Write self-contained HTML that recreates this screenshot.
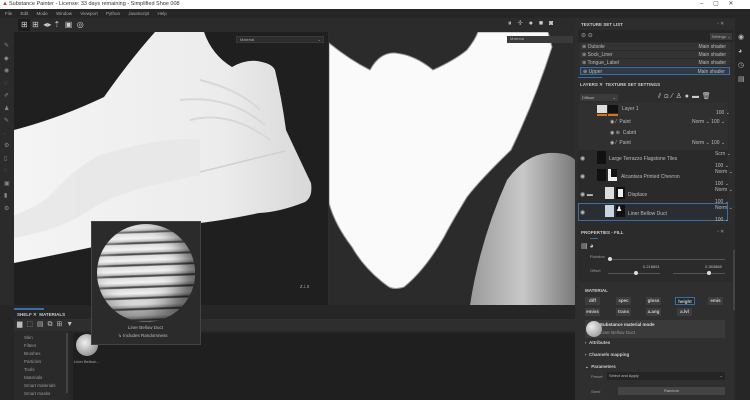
<!DOCTYPE html>
<html><head><meta charset="utf-8"><style>
*{margin:0;padding:0;box-sizing:border-box}
body{width:750px;height:400px;overflow:hidden;background:#2d2d2d;font-family:"Liberation Sans",sans-serif;font-size:5px;color:#bbb;position:relative}
.a{position:absolute}
.t{white-space:nowrap}
.row{position:absolute;left:580px;width:150px;height:8px;background:#333;border-bottom:1px solid #2a2a2a}
.btn{position:absolute;height:8px;background:#3d3d3d;color:#ccc;font-size:4.5px;text-align:center;line-height:8px;font-weight:bold}
</style></head><body>
<!-- title bar -->
<div class="a" style="left:0;top:0;width:750px;height:9px;background:#fff"></div>
<div class="a t" style="left:2px;top:1px;font-size:6px;color:#c33">&#9650;</div>
<div class="a t" style="left:9px;top:1px;font-size:5.5px;color:#333">Substance Painter - License: 33 days remaining - Simplified Shoe 008</div>
<div class="a t" style="left:700px;top:0px;font-size:6px;color:#444;word-spacing:8px">– ▢ ✕</div>
<!-- menu -->
<div class="a" style="left:0;top:9px;width:750px;height:9px;background:#262626"></div>
<div class="a t" style="left:5px;top:11px;font-size:4.5px;color:#aaa;word-spacing:7px">File Edit Mode Window Viewport Python JavaScript Help</div>
<!-- toolbar -->
<div class="a" style="left:0;top:18px;width:578px;height:14px;background:#2b2b2b"></div>
<div class="a" style="left:18px;top:19px;width:12px;height:12px;background:#1c1c1c"></div>
<div class="a t" style="left:21px;top:20px;font-size:8px;color:#ccc">⊞ &nbsp;⊞ &nbsp;◂▸ ⇡ &nbsp;▣ &nbsp;◎</div>
<div class="a t" style="left:508px;top:20px;font-size:7px;color:#ccc;word-spacing:4px">⏸ ✛ ● ■ ◙</div>
<!-- left tool strip -->
<div class="a" style="left:0;top:32px;width:14px;height:273px;background:#2b2b2b"></div>
<div class="a" style="left:4px;top:40px;width:6px;line-height:12.5px;font-size:6px;color:#888">✎<br>◆<br>◉<br>◌<br>✐<br>♟<br>✎<br>·<br>⚙<br>▯<br>◌<br>▣<br>▮<br>⚙</div>
<!-- left viewport -->
<div class="a" style="left:14px;top:32px;width:314px;height:273px;background:#1f1f1f;overflow:hidden">
<svg width="314" height="273" viewBox="14 32 314 273" style="position:absolute;left:0;top:0">
<defs><linearGradient id="g1" x1="0" y1="0" x2="1" y2="0"><stop offset="0" stop-color="#f4f4f4"/><stop offset=".7" stop-color="#ececec"/><stop offset="1" stop-color="#d8d8d8"/></linearGradient></defs>
<path d="M14 130 Q60 118 104 97 Q130 60 155 32 L204 32 Q212 55 232 67 Q248 58 262 62 Q272 64 275 70 Q282 100 286 130 Q300 160 311 183 Q313 197 305 202 Q280 212 259 213 Q225 220 200 223 Q150 235 93 247 Q50 256 14 263 Z" fill="url(#g1)"/>
<path d="M14 215 Q45 205 60 185 Q80 165 100 155 Q170 135 200 140 L200 175 Q175 180 150 186 Q110 196 90 210 Q60 230 14 238" fill="#e6e6e6" opacity=".8"/>
<path d="M200 172 L285 151" stroke="#d0d0d0" stroke-width="1.5"/>
<path d="M190 120 Q230 110 270 140 M180 100 Q230 95 265 125 M200 80 Q240 90 260 110" stroke="#d8d8d8" stroke-width="2" fill="none"/>
</svg>
<div class="a" style="left:222px;top:4px;width:88px;height:7px;background:#2c2c2c;border:1px solid #3a3a3a;font-size:4px;color:#aaa;padding-left:3px;line-height:5px">Material<span style="float:right;margin-right:2px">⌄</span></div>
<div class="a t" style="left:286px;top:252px;font-size:5px;color:#aaa">z⊥x</div>
</div>
<!-- right viewport -->
<div class="a" style="left:329px;top:32px;width:246px;height:273px;background:#2b2b2b;overflow:hidden">
<svg width="246" height="273" viewBox="329 32 246 273" style="position:absolute;left:0;top:0">
<defs><linearGradient id="g2" x1="0" y1="0" x2="1" y2="0"><stop offset="0" stop-color="#9a9a9a"/><stop offset=".5" stop-color="#c8c8c8"/><stop offset="1" stop-color="#7a7a7a"/></linearGradient></defs>
<path d="M329 43 Q350 60 370 70 Q380 52 395 53 Q415 55 433 70 Q455 60 467 50 Q475 40 478 32 L548 32 L552 47 Q535 100 511 150 Q480 180 467 197 Q450 225 444 237 Q425 270 404 287 Q395 290 389 287 Q365 270 352 247 Q335 225 329 203 Z" fill="#fafafa" stroke="#999" stroke-width="1"/>
<path d="M470 305 Q480 240 507 180 Q525 155 548 153 Q568 152 575 160 L575 305 Z" fill="url(#g2)"/>
</svg>
<div class="a" style="left:178px;top:4px;width:66px;height:7px;background:#3a3a3a;font-size:4px;color:#aaa;padding-left:3px;line-height:6px">Material</div>
</div>
<!-- shelf -->
<div class="a" style="left:0;top:305px;width:578px;height:95px;background:#262626"></div>
<div class="a" style="left:14px;top:308px;width:30px;height:2px;background:#3a6ea5"></div>
<div class="a t" style="left:17px;top:312px;font-size:4.5px;color:#ccc;font-weight:bold">SHELF ✕ &nbsp;MATERIALS</div>
<div class="a" style="left:14px;top:319px;width:564px;height:12px;background:#2e2e2e"></div>
<div class="a t" style="left:17px;top:320px;font-size:7px;color:#bbb;word-spacing:2px">▆ ⬚ ▤ ⧉ ⊞ ▼</div>
<div class="a" style="left:14px;top:331px;width:55px;height:69px;background:#2a2a2a"></div>
<div class="a" style="left:24px;top:334px;font-size:4.5px;color:#999;line-height:8px">Skin<br>Filters<br>Brushes<br>Particles<br>Tools<br>Materials<br>Smart materials<br>Smart masks</div>
<div class="a" style="left:66px;top:333px;width:2px;height:60px;background:#444"></div>
<div class="a" style="left:73px;top:333px;width:505px;height:67px;background:#1f1f1f"></div>
<div class="a" style="left:76px;top:334px;width:22px;height:22px;border-radius:50%;background:radial-gradient(circle at 40% 40%,#eee,#999 70%,#555)"></div>
<div class="a t" style="left:74px;top:359px;font-size:4px;color:#aaa">Liner Bellow...</div>
<!-- popup -->
<div class="a" style="left:91px;top:221px;width:110px;height:124px;background:#2b2b2b;border:1px solid #444"></div>
<div class="a" style="left:97px;top:224px;width:98px;height:98px;border-radius:50%;background:repeating-linear-gradient(178deg,#ddd 0,#f2f2f2 5px,#bbb 8px,#555 9px,#444 10px,#ccc 11px),#ccc;box-shadow:inset -10px -8px 18px rgba(0,0,0,.6),inset 6px 6px 12px rgba(255,255,255,.3)"></div>
<div class="a t" style="left:128px;top:325px;font-size:4.5px;color:#bbb">Liner Bellow Duct</div>
<div class="a t" style="left:118px;top:333px;font-size:4.5px;color:#bbb">↳ Includes Randomness</div>
<!-- right panel -->
<div class="a" style="left:575px;top:18px;width:160px;height:382px;background:#2d2d2d"></div>
<div class="a" style="left:735px;top:18px;width:15px;height:382px;background:#262626"></div>
<div class="a" style="left:738px;top:31px;font-size:7px;line-height:14px;color:#bbb">◉<br>◕<br>◷<br>▤</div>
<div class="a t" style="left:581px;top:22px;font-size:4.5px;color:#ccc;font-weight:bold">TEXTURE SET LIST</div>
<div class="a t" style="left:717px;top:21px;font-size:5px;color:#999">▫ ✕</div>
<div class="a" style="left:578px;top:30px;width:155px;height:12px;background:#262626"></div>
<div class="a t" style="left:581px;top:32px;font-size:6px;color:#aaa">⊜ ⊝</div>
<div class="a" style="left:710px;top:33px;width:22px;height:7px;background:#3b3b3b;font-size:4px;color:#aaa;text-align:center;line-height:7px">Settings ⌄</div>
<div class="row" style="top:43px"><span class="a t" style="left:2px;top:1px">⊕ Outsole</span><span class="a t" style="right:4px;top:1px">Main shader</span></div>
<div class="row" style="top:51px"><span class="a t" style="left:2px;top:1px">⊕ Sock_Liner</span><span class="a t" style="right:4px;top:1px">Main shader</span></div>
<div class="row" style="top:59px"><span class="a t" style="left:2px;top:1px">⊕ Tongue_Label</span><span class="a t" style="right:4px;top:1px">Main shader</span></div>
<div class="row" style="top:67px;border:1px solid #3a6ea5;background:#2f3a46"><span class="a t" style="left:2px;top:1px">⊕ Upper</span><span class="a t" style="right:4px;top:1px">Main shader</span></div>
<div class="a" style="left:578px;top:77px;width:24px;height:1px;background:#3a6ea5"></div>
<div class="a t" style="left:580px;top:82px;font-size:4.5px;color:#ccc;font-weight:bold">LAYERS ✕ &nbsp;TEXTURE SET SETTINGS</div>
<div class="a" style="left:580px;top:94px;width:38px;height:7px;background:#3b3b3b;font-size:4px;line-height:7px;padding-left:2px">Diffuse <span style="float:right;margin-right:2px">⌄</span></div>
<div class="a t" style="left:658px;top:92px;font-size:7px;color:#ccc;word-spacing:1px">⫽ ⊡ ⁄ ♙ ● ▬ 🗑</div>
<div class="a" style="left:578px;top:103px;width:150px;height:47px;background:#303030"></div>
<div class="a" style="left:597px;top:105px;width:10px;height:8px;background:#ddd"></div><div class="a" style="left:608px;top:105px;width:10px;height:8px;background:#111"></div>
<div class="a" style="left:597px;top:114px;width:10px;height:2px;background:#d9741c"></div><div class="a" style="left:608px;top:114px;width:10px;height:2px;background:#d9741c"></div>
<div class="a t" style="left:622px;top:106px">Layer 1</div><div class="a t" style="left:716px;top:110px">100 ⌄</div>
<div class="a t" style="left:610px;top:119px">◉ ⁄ &nbsp;Paint</div><div class="a t" style="left:692px;top:119px">Norm ⌄ 100 ⌄</div>
<div class="a t" style="left:610px;top:130px">◉ ⊛ &nbsp;Cabrit</div>
<div class="a t" style="left:610px;top:140px">◉ ⁄ &nbsp;Paint</div><div class="a t" style="left:692px;top:140px">Norm ⌄ 100 ⌄</div>
<div class="a" style="left:578px;top:150px;width:150px;height:72px;background:#2a2a2a"></div>
<div class="a t" style="left:580px;top:155px;font-size:6px">◉</div><div class="a" style="left:597px;top:151px;width:9px;height:13px;background:#111"></div>
<div class="a t" style="left:609px;top:156px">Large Terrazzo Flagstone Tiles</div><div class="a t" style="left:715px;top:151px">Scrn ⌄<br><br>100 ⌄</div>
<div class="a t" style="left:580px;top:173px;font-size:6px">◉</div><div class="a" style="left:597px;top:169px;width:9px;height:12px;background:#111"></div><div class="a" style="left:608px;top:169px;width:9px;height:12px;background:#111;border:1px solid #eee;border-width:0 0 4px 3px"></div>
<div class="a t" style="left:621px;top:174px">Alcantara Printed Chevron</div><div class="a t" style="left:715px;top:169px">Norm ⌄<br><br>100 ⌄</div>
<div class="a t" style="left:580px;top:191px;font-size:6px">◉ ▬</div><div class="a" style="left:605px;top:187px;width:9px;height:12px;background:#ddd"></div><div class="a" style="left:616px;top:187px;width:9px;height:12px;background:#eee;border:2px solid #111"></div>
<div class="a t" style="left:628px;top:192px">Displace</div><div class="a t" style="left:715px;top:187px">Norm ⌄<br><br>100 ⌄</div>
<div class="a" style="left:578px;top:203px;width:150px;height:18px;border:1px solid #3a6ea5;background:#2a2d31"></div>
<div class="a t" style="left:580px;top:209px;font-size:6px">◉</div><div class="a" style="left:605px;top:205px;width:9px;height:12px;background:#c8d4e0"></div><div class="a" style="left:616px;top:205px;width:9px;height:12px;background:#111;color:#eee;font-size:7px">♟</div>
<div class="a t" style="left:628px;top:211px">Liner Bellow Duct</div><div class="a t" style="left:715px;top:205px">Norm ⌄<br><br>100 ⌄</div>
<!-- properties -->
<div class="a" style="left:578px;top:224px;width:155px;height:176px;background:#2b2b2b"></div>
<div class="a t" style="left:581px;top:230px;font-size:4.5px;color:#ccc;font-weight:bold">PROPERTIES - FILL</div>
<div class="a t" style="left:717px;top:229px;font-size:5px;color:#999">▫ ✕</div>
<div class="a t" style="left:581px;top:242px;font-size:7px;color:#ccc">▤ ◕</div>
<div class="a" style="left:590px;top:238px;width:8px;height:1px;background:#3a6ea5"></div>
<div class="a t" style="left:590px;top:254px;font-size:4px;color:#999">Rotation</div>
<div class="a" style="left:610px;top:259px;width:115px;height:1px;background:#555"></div><div class="a" style="left:608px;top:257px;width:4px;height:4px;border-radius:50%;background:#ddd"></div>
<div class="a t" style="left:643px;top:264px;font-size:4px">0.218651</div><div class="a t" style="left:705px;top:264px;font-size:4px">0.383888</div>
<div class="a t" style="left:590px;top:268px;font-size:4px;color:#999">Offset</div>
<div class="a" style="left:608px;top:273px;width:52px;height:1px;background:#555"></div><div class="a" style="left:634px;top:271px;width:4px;height:4px;border-radius:50%;background:#ddd"></div>
<div class="a" style="left:673px;top:273px;width:52px;height:1px;background:#555"></div><div class="a" style="left:707px;top:271px;width:4px;height:4px;border-radius:50%;background:#ddd"></div>
<div class="a" style="left:578px;top:282px;width:155px;height:118px;background:#2f2f2f"></div>
<div class="a t" style="left:585px;top:288px;font-size:4.5px;color:#ccc;font-weight:bold">MATERIAL</div>
<div class="btn" style="left:585px;top:297px;width:15px">diff</div><div class="btn" style="left:616px;top:297px;width:15px">spec</div><div class="btn" style="left:646px;top:297px;width:15px">gloss</div><div class="btn" style="left:675px;top:297px;width:20px;border:1px solid #3a6ea5;background:#1f2a36">height</div><div class="btn" style="left:708px;top:297px;width:15px">emis</div>
<div class="btn" style="left:585px;top:308px;width:15px">emiss</div><div class="btn" style="left:616px;top:308px;width:15px">trans</div><div class="btn" style="left:646px;top:308px;width:15px">a.ang</div><div class="btn" style="left:677px;top:308px;width:15px">a.lvl</div>
<div class="a" style="left:585px;top:320px;width:140px;height:18px;background:#3a3a3a"></div>
<div class="a" style="left:586px;top:321px;width:16px;height:16px;border-radius:50%;background:radial-gradient(circle at 35% 35%,#eee,#888)"></div>
<div class="a t" style="left:600px;top:322px;font-size:4.5px;color:#ddd;font-weight:bold">Substance material mode</div>
<div class="a t" style="left:600px;top:330px;font-size:4.5px;color:#999">Liner Bellow Duct</div>
<div class="a t" style="left:585px;top:340px;font-size:4.5px;color:#ccc;font-weight:bold">› &nbsp;Attributes</div>
<div class="a t" style="left:585px;top:352px;font-size:4.5px;color:#ccc;font-weight:bold">› &nbsp;Channels mapping</div>
<div class="a t" style="left:585px;top:364px;font-size:4.5px;color:#ccc;font-weight:bold">⌄ &nbsp;Parameters</div>
<div class="a t" style="left:591px;top:374px;font-size:4px;color:#999">Preset</div>
<div class="a" style="left:607px;top:372px;width:118px;height:8px;background:#242424;font-size:4px;line-height:8px;padding-left:2px">Select and Apply<span style="float:right;margin-right:2px">⌄</span></div>
<div class="a t" style="left:591px;top:389px;font-size:4px;color:#999">Seed</div>
<div class="a" style="left:618px;top:387px;width:107px;height:8px;background:#444;font-size:4px;line-height:8px;text-align:center">Random</div>
<div class="a" style="left:733px;top:250px;width:2px;height:60px;background:#444"></div>
</body></html>
